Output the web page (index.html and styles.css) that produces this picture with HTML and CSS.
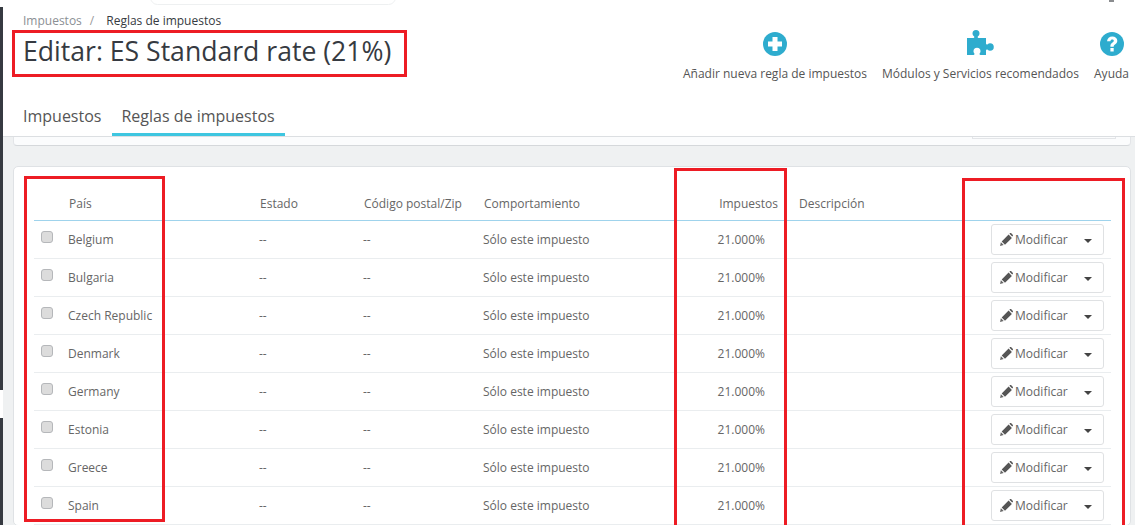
FILE: index.html
```html
<!DOCTYPE html>
<html lang="es">
<head>
<meta charset="utf-8">
<title>Editar: ES Standard rate (21%)</title>
<link rel="stylesheet" href="styles.css">
</head>
<body>
<svg class="defs" aria-hidden="true">
  <symbol id="pencil" viewBox="0 0 13 13">
    <path d="M0 13l.9-3.700 2.800 2.800z" fill="#666"/>
    <path d="M1.700 8.500L8.600 1.600l3.300 3.300-6.900 6.900zM9.400.8l.5-.5c.4-.4 1-.4 1.400 0l1.400 1.400c.4.4.4 1 0 1.400l-.5.500z" fill="#555"/>
  </symbol>
</svg>
<div class="rail"><span class="rail-top"></span><span class="rail-bottom"></span></div>
<div class="search-stub"></div>
<div class="user-stub"></div>
<header class="head">
  <div class="head-left">
    <div class="crumbs"><span class="crumb-link">Impuestos</span><span class="crumb-sep">/</span><span>Reglas de impuestos</span></div>
    <h1 class="title">Editar: ES Standard rate (21%)</h1>
  </div>
  <nav class="toolbar">
    <a class="tool">
      <svg class="tool-icon" viewBox="0 0 24 24"><circle cx="12" cy="12" r="12" fill="#2eacce"/><path d="M9.500 5h5v4.500H19v5h-4.500V19h-5v-4.500H5v-5h4.500z" fill="#fff"/></svg>
      <span>Añadir nueva regla de impuestos</span>
    </a>
    <a class="tool">
      <svg class="tool-icon tool-icon-tall" viewBox="0 0 27 25"><path d="M0 8H6.500C7.500 8 7.500 7 7 6.300 6 5.400 5.500 4.600 5.500 3.500A3.500 3.500 0 0 1 12.500 3.500C12.500 4.600 12 5.400 11 6.300 10.500 7 10.500 8 11.500 8H19V13.500C19 14.500 20 14.800 20.700 14.200 21.300 13.600 22 13.200 23 13.200A3.800 3.800 0 0 1 23 20.800C22 20.800 21.300 20.400 20.700 19.800 20 19.200 19 19.500 19 20.500V25H13.500C12.500 25 12.200 24 12.800 23.300 13.400 22.600 13.500 22 13.500 21.300A3.500 3.500 0 0 0 6.500 21.300C6.500 22 6.600 22.600 7.200 23.300 7.800 24 7.500 25 6.500 25H0Z" fill="#2eacce"/></svg>
      <span>Módulos y Servicios recomendados</span>
    </a>
    <a class="tool">
      <svg class="tool-icon" viewBox="0 0 24 24"><circle cx="12" cy="12" r="12" fill="#2eacce"/><path d="M7 9.200C7.400 6.300 9.400 4.500 12.300 4.500c2.900 0 5 1.800 5 4.300 0 1.900-1 2.900-2.300 3.800-1 .7-1.300 1.100-1.300 2.100h-3.300c-.1-1.900.5-2.900 1.800-3.900 1-.7 1.600-1.200 1.600-2 0-.8-.7-1.300-1.600-1.300-1 0-1.600.6-1.800 1.800zM10.400 16h3.300v3.400h-3.300z" fill="#fff"/></svg>
      <span>Ayuda</span>
    </a>
  </nav>
</header>
<div class="tabs">
  <a class="tab">Impuestos</a>
  <a class="tab tab-on">Reglas de impuestos</a>
</div>
<main class="content">
  <div class="stub-panel"><div class="stub-field"></div></div>
  <section class="panel">
    <table class="rules">
      <thead>
        <tr><th class="c-check"></th><th class="c-country">País</th><th class="c-state">Estado</th><th class="c-zip">Código postal/Zip</th><th class="c-behav">Comportamiento</th><th class="c-tax">Impuestos</th><th class="c-desc">Descripción</th><th class="c-act"></th></tr>
      </thead>
      <tbody>
        <tr><td class="c-check"><span class="check"></span></td><td class="c-country">Belgium</td><td class="c-state">--</td><td class="c-zip">--</td><td class="c-behav">Sólo este impuesto</td><td class="c-tax">21.000%</td><td class="c-desc"></td><td class="c-act"><span class="edit"><svg class="pencil"><use href="#pencil"/></svg>Modificar<i class="caret"></i></span></td></tr>
        <tr><td class="c-check"><span class="check"></span></td><td class="c-country">Bulgaria</td><td class="c-state">--</td><td class="c-zip">--</td><td class="c-behav">Sólo este impuesto</td><td class="c-tax">21.000%</td><td class="c-desc"></td><td class="c-act"><span class="edit"><svg class="pencil"><use href="#pencil"/></svg>Modificar<i class="caret"></i></span></td></tr>
        <tr><td class="c-check"><span class="check"></span></td><td class="c-country">Czech Republic</td><td class="c-state">--</td><td class="c-zip">--</td><td class="c-behav">Sólo este impuesto</td><td class="c-tax">21.000%</td><td class="c-desc"></td><td class="c-act"><span class="edit"><svg class="pencil"><use href="#pencil"/></svg>Modificar<i class="caret"></i></span></td></tr>
        <tr><td class="c-check"><span class="check"></span></td><td class="c-country">Denmark</td><td class="c-state">--</td><td class="c-zip">--</td><td class="c-behav">Sólo este impuesto</td><td class="c-tax">21.000%</td><td class="c-desc"></td><td class="c-act"><span class="edit"><svg class="pencil"><use href="#pencil"/></svg>Modificar<i class="caret"></i></span></td></tr>
        <tr><td class="c-check"><span class="check"></span></td><td class="c-country">Germany</td><td class="c-state">--</td><td class="c-zip">--</td><td class="c-behav">Sólo este impuesto</td><td class="c-tax">21.000%</td><td class="c-desc"></td><td class="c-act"><span class="edit"><svg class="pencil"><use href="#pencil"/></svg>Modificar<i class="caret"></i></span></td></tr>
        <tr><td class="c-check"><span class="check"></span></td><td class="c-country">Estonia</td><td class="c-state">--</td><td class="c-zip">--</td><td class="c-behav">Sólo este impuesto</td><td class="c-tax">21.000%</td><td class="c-desc"></td><td class="c-act"><span class="edit"><svg class="pencil"><use href="#pencil"/></svg>Modificar<i class="caret"></i></span></td></tr>
        <tr><td class="c-check"><span class="check"></span></td><td class="c-country">Greece</td><td class="c-state">--</td><td class="c-zip">--</td><td class="c-behav">Sólo este impuesto</td><td class="c-tax">21.000%</td><td class="c-desc"></td><td class="c-act"><span class="edit"><svg class="pencil"><use href="#pencil"/></svg>Modificar<i class="caret"></i></span></td></tr>
        <tr><td class="c-check"><span class="check"></span></td><td class="c-country">Spain</td><td class="c-state">--</td><td class="c-zip">--</td><td class="c-behav">Sólo este impuesto</td><td class="c-tax">21.000%</td><td class="c-desc"></td><td class="c-act"><span class="edit"><svg class="pencil"><use href="#pencil"/></svg>Modificar<i class="caret"></i></span></td></tr>
      </tbody>
    </table>
  </section>
</main>
<div class="mark mark-title"></div>
<div class="mark mark-country"></div>
<div class="mark mark-tax"></div>
<div class="mark mark-act"></div>
</body>
</html>
```
FILE: styles.css
```css
* { box-sizing: border-box; }
html, body { margin: 0; height: 525px; overflow: hidden; }
body {
  position: relative;
  background: #fff;
  font-family: "Open Sans", sans-serif;
  font-size: 12px;
  color: #666;
}
.defs { position: absolute; width: 0; height: 0; }
.rail { position: absolute; left: 0; top: 7px; bottom: 0; width: 3px; display: flex; flex-direction: column; gap: 28px; background: #fff; z-index: 3; }
.rail-top { height: 383px; background: #363a41; }
.rail-bottom { flex: 1; background: #363a41; }
.search-stub {
  position: absolute; left: 150px; top: -10px; width: 246px; height: 15px;
  border: 1px solid #eef0f1; border-radius: 8px; background: #fff;
}
.user-stub { position: absolute; left: 1109px; top: 0; width: 5px; height: 2px; background: #8a8c8f; }
.head { display: flex; justify-content: space-between; height: 100px; padding: 13px 6px 0 23px; }
.crumbs { font-size: 12px; line-height: 16px; color: #363a41; }
.crumb-link { color: #8b8f94; }
.crumb-sep { margin: 0 12px 0 8px; color: #999; }
.title { margin: 4px 0 0; font-size: 26.600px; font-weight: 400; line-height: 36px; color: #363a41; }
.toolbar { display: flex; gap: 15px; padding-top: 19px; }
.tool { display: flex; flex-direction: column; align-items: center; font-size: 12px; line-height: 16px; color: #555; white-space: nowrap; }
.tool-icon { height: 24px; margin-bottom: 10px; }
.tool-icon-tall { height: 25px; margin-top: -2px; margin-bottom: 11px; }
.tabs { display: flex; height: 36px; padding-left: 13px; background: #fff; }
.tab { height: 36px; padding: 5px 10px 0; font-size: 16px; line-height: 22px; color: #555; }
.tab-on { margin-left: .5px; padding-left: 9.500px; border-bottom: 3px solid #3ec6e0; }
.content { height: 389px; padding: 0 4px 0 13px; background: #eff1f2; border-top: 1px solid #dcdfe2; overflow: hidden; }
.stub-panel {
  position: relative; height: 9px; background: #fbfcfd;
  border: 1px solid #e3e5e8; border-bottom-color: #d5d8db; border-top: 0; border-radius: 0 0 4px 4px;
}
.stub-field {
  position: absolute; right: 14px; top: 0; width: 144px; height: 2px;
  border: 1px solid #e3e5e8; border-top: 0;
}
.panel {
  margin-top: 20px; height: 360px; padding: 17px 20px 0;
  background: #fff; border: 1px solid #dfe2e5; border-radius: 5px;
}
.rules { width: 1077px; table-layout: fixed; border-collapse: separate; border-spacing: 0; }
.rules th {
  height: 37px; padding: 2px 0 0; text-align: left; font-size: 12px; font-weight: 400; color: #666;
  border-bottom: 1px solid #9fd3ec;
}
.rules td { height: 38px; padding: 0 0 1px; border-bottom: 1px solid #eaedef; font-size: 12px; color: #666; }
.c-check { width: 35px; }
.c-country { width: 191px; }
td.c-country { text-indent: -1px; }
.c-state { width: 104px; }
.c-zip { width: 120px; }
.c-behav { width: 195px; }
td.c-state, td.c-zip, td.c-behav { text-indent: -1px; }
.c-tax { width: 120px; }
.rules th.c-tax { text-align: right; padding-right: 21px; }
.rules td.c-tax { text-align: right; padding-right: 34px; }
.c-desc { width: 184px; }
.c-act { width: 128px; }
.check {
  display: block; width: 12px; height: 12px; margin: -4px 0 0 7px;
  background: #dcdcdc; border: 1px solid #b5b7ba; border-radius: 3px;
}
.edit {
  display: flex; align-items: center; position: relative;
  width: 113px; height: 31px; margin-left: 8px; padding-left: 8px;
  border: 1px solid #dfe1e3; border-radius: 3px; background: #fff; color: #666;
}
.pencil { width: 13px; height: 13px; margin-right: 2px; }
.caret {
  position: absolute; right: 11px; top: 14px; width: 0; height: 0;
  border-style: solid; border-width: 4px 4px 0; border-color: #444 transparent transparent;
}
.mark { position: absolute; border: 3px solid #ed1c24; z-index: 4; }
.mark-title { left: 12px; top: 30px; width: 395px; height: 47px; }
.mark-country { left: 24px; top: 176px; width: 141px; height: 346px; }
.mark-tax { left: 674px; top: 168px; width: 113px; height: 357px; border-bottom: 0; }
.mark-act { left: 962px; top: 178px; width: 163px; height: 347px; border-bottom: 0; }
```
